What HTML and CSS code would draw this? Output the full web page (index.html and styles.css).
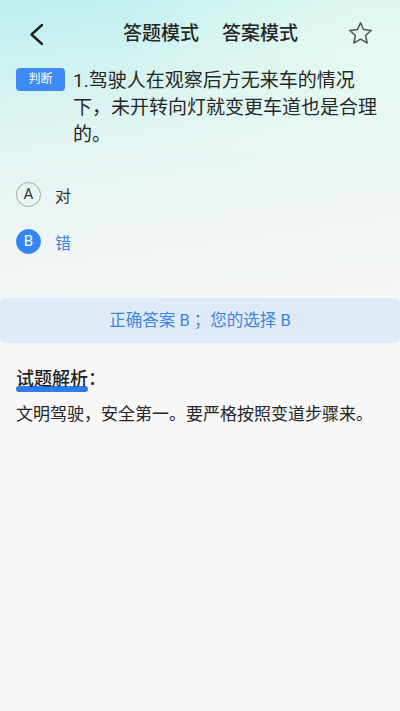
FILE: index.html
```html
<!DOCTYPE html>
<html lang="zh">
<head>
  <meta charset="UTF-8" />
  <meta name="viewport" content="width=device-width, initial-scale=1" />
  <title>答题</title>
  <link rel="stylesheet" href="styles.css">
</head>
<body>
  <div class="page">
    <!-- top bar -->
    <div class="header">
      <svg class="back" width="24" height="24" viewBox="0 0 24 24">
        <path d="M17 3 L6.5 12.5 L17 22" fill="none" stroke="#222" stroke-width="2.4" stroke-linecap="round" stroke-linejoin="round"/>
      </svg>
      <div class="modes">
        <span class="mode active">答题模式</span>
        <span class="mode">答案模式</span>
      </div>
      <svg class="star" width="27" height="25" viewBox="0 0 27 25">
        <path d="M13.5 1.8 L16.6 8.6 L24.2 9.4 L18.6 14.5 L20.2 22 L13.5 18.2 L6.8 22 L8.4 14.5 L2.8 9.4 L10.4 8.6 Z" fill="none" stroke="#555" stroke-width="1.5" stroke-linejoin="round"/>
      </svg>
    </div>

    <!-- question -->
    <div class="question">
      <span class="tag">判断</span>
      <p class="q-text">1.驾驶人在观察后方无来车的情况下，未开转向灯就变更车道也是合理的。</p>
    </div>

    <div class="options">
      <div class="option">
        <span class="letter">A</span>
        <span class="label">对</span>
      </div>
      <div class="option selected">
        <span class="letter">B</span>
        <span class="label">错</span>
      </div>
    </div>

    <div class="answer-bar">正确答案 B ；您的选择 B</div>

    <!-- explanation -->
    <div class="analysis">
      <h3 class="analysis-title"><span class="mark">试题解析</span>：</h3>
      <p class="analysis-text">文明驾驶，安全第一。要严格按照变道步骤来。</p>
    </div>
  </div>
</body>
</html>
```

FILE: styles.css
```css
* { margin: 0; padding: 0; box-sizing: border-box; }
html, body { width: 100%; height: 100%; }

body {
  font-family: Roboto, "Noto Sans CJK SC", "Noto Sans", sans-serif;
  color: #222;
  background-color: #f7f7f7;
}

/* cyan wash at the top, fading out before the answer bar */
.page {
  min-height: 100%;
  background:
    radial-gradient(ellipse 260px 160px at 380px 40px, rgba(236, 252, 240, 0.7), rgba(236, 252, 240, 0)),
    linear-gradient(172deg, #bcefee 0%, #d2f3f0 22%, #e5f6f3 45%, #f0f5f4 70%, #f4f6f6 86%, #f7f7f7 100%) top / 100% 320px no-repeat,
    #f7f7f7;
}

/* header */
.header {
  display: flex;
  align-items: center;
  height: 68px;
}
.back {
  margin-left: 25px;
  flex: none;
}
.modes {
  display: flex;
  gap: 23px;
  margin-left: 74px;
}
.mode {
  font-size: 19px;
  font-weight: 500;
  color: #262626;
  line-height: 1;
  margin-top: -2px;
}
.star {
  margin-left: auto;
  margin-right: 26px;
  margin-top: -2px;
}

/* question */
.question {
  display: flex;
  align-items: flex-start;
  padding: 0 16px;
}
.tag {
  flex: none;
  width: 49px;
  height: 23px;
  margin-right: 8px;
  border-radius: 4px;
  background: #3d8af5;
  color: #fff;
  font-size: 12px;
  line-height: 23px;
  text-align: center;
}
.q-text {
  font-size: 19px;
  line-height: 27px;
  color: #262626;
  margin-top: -1px;
}

/* options */
.options {
  margin-top: 23px;
}
.option {
  display: flex;
  align-items: center;
  height: 47px;
  padding-left: 16px;
}
.letter {
  width: 25px;
  height: 25px;
  border: 1px solid #a8a8a8;
  border-radius: 50%;
  font-size: 15px;
  line-height: 23px;
  text-align: center;
  color: #333;
}
.label {
  margin-left: 14px;
  font-size: 16px;
  color: #333;
}
.option.selected .letter {
  background: #3486f2;
  border-color: #3486f2;
  color: #fff;
}
.option.selected .label {
  color: #3a82dd;
}

/* answer bar */
.answer-bar {
  margin-top: 33px;
  height: 45px;
  border-radius: 6px;
  background: #e0eaf6;
  color: #3a86e0;
  font-size: 16.5px;
  line-height: 45px;
  text-align: center;
}

/* analysis */
.analysis {
  padding: 24px 16px 0;
}
.analysis-title {
  font-size: 18px;
  font-weight: 500;
  line-height: 24px;
  color: #1f1f1f;
}
.mark {
  position: relative;
  z-index: 0;
}
.mark::after {
  content: "";
  position: absolute;
  left: 0;
  right: 0;
  bottom: -3px;
  height: 6px;
  border-radius: 3px;
  background: #2f7ce8;
  z-index: -1;
}
.analysis-text {
  margin-top: 11px;
  font-size: 17px;
  line-height: 24px;
  color: #262626;
}
```
